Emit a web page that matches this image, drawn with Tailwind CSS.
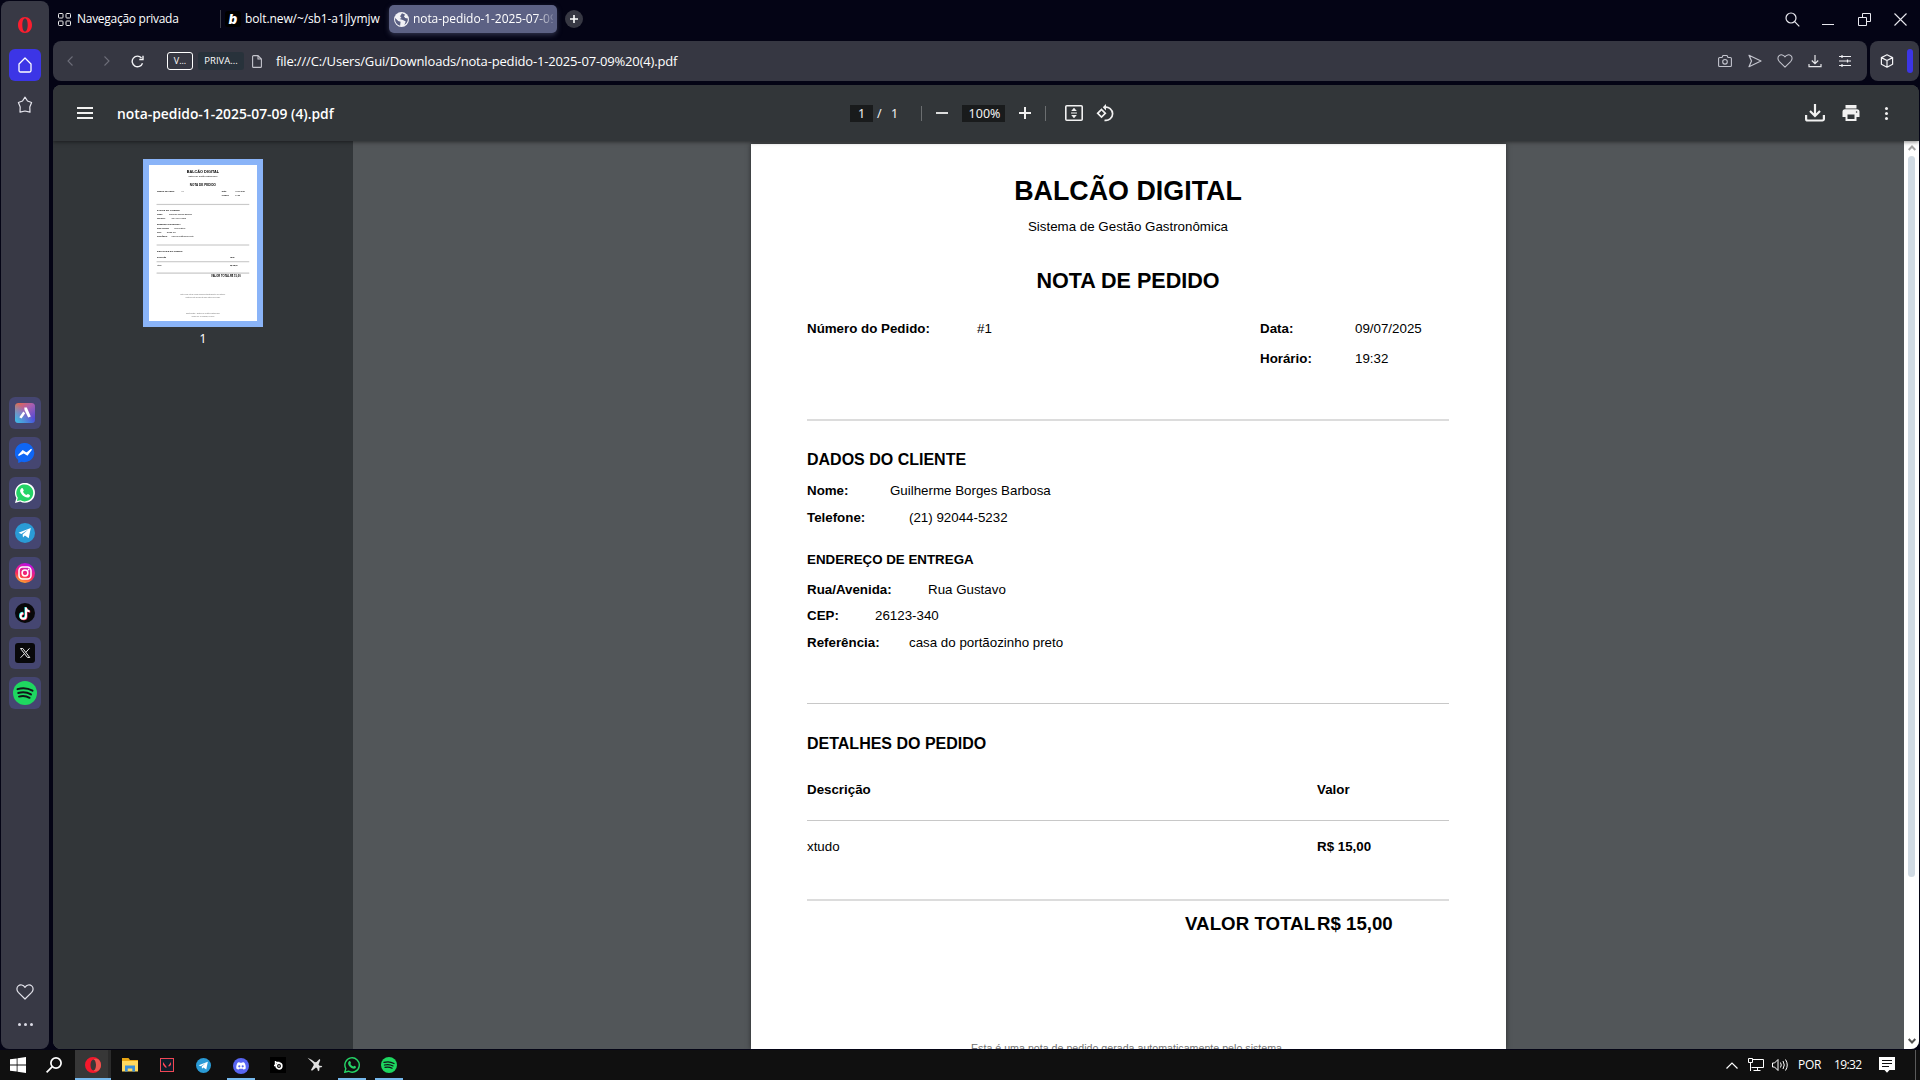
<!DOCTYPE html>
<html lang="pt-BR">
<head>
<meta charset="utf-8">
<title>nota-pedido-1-2025-07-09 (4).pdf</title>
<script src="https://cdn.jsdelivr.net/npm/@tailwindcss/browser@4"></script>
</head>
<body class="w-[1920px] h-[1080px] overflow-hidden bg-[#040415] flex flex-col text-white font-['Open_Sans',sans-serif]">
<svg class="hidden">
  <defs>
    <symbol id="tg" viewBox="0 0 20 20"><circle cx="10" cy="10" r="10" fill="#2a9bd6"/><path d="M3.5 9.7 15.8 4.9 13.7 15.3 9.9 12.6 8 14.4 7.6 11.4 13.2 6.6 6.4 10.9Z" fill="#fff"/></symbol>
    <symbol id="sp" viewBox="0 0 24 24"><circle cx="12" cy="12" r="12" fill="#1ed760"/><path d="M4.5 8.2c5-1.5 10.500-1 15 1.500M5.200 12c4.300-1.200 9-.8 12.800 1.400M6 15.600c3.600-1 7.400-.6 10.600 1.200" fill="none" stroke="#101418" stroke-width="1.900" stroke-linecap="round"/></symbol>
    <symbol id="heart" viewBox="0 0 18 16"><path d="M9 15 2.300 8.300C.4 6.300.5 3.400 2.300 1.900 4.300.3 7.300.7 9 3.300 10.700.7 13.700.3 15.700 1.900 17.500 3.400 17.600 6.300 15.700 8.300Z" fill="none" stroke="currentColor" stroke-width="1.200" stroke-linejoin="round"/></symbol>
    <symbol id="phone" viewBox="0 0 20 20"><path d="M6.300 5.400c.5-.6 1.300-.6 1.600.1l.8 1.700c.2.5-.7 1.300-.7 1.600.8 1.600 1.900 2.500 3.500 3.200.4 0 1-1.200 1.500-1l1.700.9c.5.3.3 1.500-.4 2.100-1.200 1-3 .7-5-.4-1.700-1-3-2.500-3.700-4-.8-1.700-.5-3.200.7-4.200Z" fill="currentColor"/></symbol>
  </defs>
</svg>

<div class="flex h-[1050px] shrink-0">
  <!-- Opera sidebar -->
  <aside class="ml-px mt-px mb-px w-12 rounded-lg bg-[#383945] flex flex-col items-center text-[#e4e4ec]">
    <svg class="mt-4 w-4 h-4" viewBox="0 0 16 16"><path fill-rule="evenodd" d="M8 0c4 0 7 3.500 7 8S12 16 8 16 1 12.500 1 8 4 0 8 0Zm0 1.500C6.400 1.500 5.300 4.200 5.300 8s1.100 6.500 2.700 6.500S10.700 11.800 10.700 8 9.600 1.500 8 1.500Z" fill="#fa1e2f"/></svg>
    <div class="mt-4 size-8 rounded-md bg-[#3c35e6] flex items-center justify-center">
      <svg class="w-4 h-4" viewBox="0 0 16 16"><path d="M8 1 14 7V13.500a1.500 1.500 0 0 1-1.500 1.500h-9A1.500 1.500 0 0 1 2 13.500V7Z" fill="none" stroke="#fff" stroke-width="1.300" stroke-linejoin="round"/></svg>
    </div>
    <svg class="mt-[15px] w-[18px] h-[18px]" viewBox="0 0 18 18"><path d="M9 1.200 11.500 5 15.600 6.500 13.800 11 14 16.200 9 15 4 16.200 4.200 11 2.400 6.500 6.500 5Z" fill="none" stroke="currentColor" stroke-width="1.200" stroke-linejoin="round"/></svg>
    <div class="mt-[283px] flex flex-col gap-2">
      <div class="size-8 rounded-md bg-[#454671] flex items-center justify-center">
        <svg class="size-5" viewBox="0 0 20 20"><defs><linearGradient id="ar" x1="0" y1="0" x2=".7" y2="1"><stop offset="0" stop-color="#f0683a"/><stop offset=".45" stop-color="#a95fb0"/><stop offset="1" stop-color="#4f49d8"/></linearGradient><linearGradient id="ar2" x1="0" y1="1" x2=".6" y2=".4"><stop offset="0" stop-color="#35c6e8"/><stop offset="1" stop-color="#35c6e8" stop-opacity="0"/></linearGradient></defs><rect width="20" height="20" rx="3.500" fill="url(#ar)"/><rect width="20" height="20" rx="3.500" fill="url(#ar2)"/><path d="M9.300 4.500H11.800L15.800 13.500 13.200 14.500 9.500 7ZM8.300 8.500 10.200 10.200 6.500 15.500 4.300 14.300Z" fill="#fff"/></svg>
      </div>
      <div class="size-8 rounded-md bg-[#454671] flex items-center justify-center">
        <svg class="size-5" viewBox="0 0 20 20"><path d="M10 0a10 9.600 0 1 1-3.500 18.800L3.200 20V17A9.700 9.700 0 0 1 10 0Z" fill="#0f66f5"/><path d="M3.500 12.500 7.800 7.800 11.500 10.300 16.500 6.300 12.300 12 8.800 9.800Z" fill="#fff" stroke="#fff" stroke-width="1.200"/></svg>
      </div>
      <div class="size-8 rounded-md bg-[#454671] flex items-center justify-center text-white">
        <svg class="size-5" viewBox="0 0 20 20"><path d="M0 20 1.400 15A10 10 0 1 1 5.200 18.600Z" fill="#fff"/><path d="M1.900 18.100 2.800 14.800A8.500 8.500 0 1 1 5.400 17.200Z" fill="#25d366"/><use href="#phone"/></svg>
      </div>
      <div class="size-8 rounded-md bg-[#454671] flex items-center justify-center"><svg class="size-5"><use href="#tg"/></svg></div>
      <div class="size-8 rounded-md bg-[#454671] flex items-center justify-center">
        <svg class="size-5" viewBox="0 0 20 20"><defs><linearGradient id="ig" x1=".25" y1="1" x2=".6" y2="0"><stop offset="0" stop-color="#ffb627"/><stop offset=".4" stop-color="#fb2a5c"/><stop offset="1" stop-color="#b80de8"/></linearGradient></defs><circle cx="10" cy="10" r="10" fill="url(#ig)"/><rect x="4" y="4" width="12" height="12" rx="3.500" fill="none" stroke="#fff" stroke-width="1.500"/><circle cx="10" cy="10" r="2.900" fill="none" stroke="#fff" stroke-width="1.500"/><circle cx="13.600" cy="6.500" r=".9" fill="#fff"/></svg>
      </div>
      <div class="size-8 rounded-md bg-[#454671] flex items-center justify-center">
        <svg class="size-5" viewBox="0 0 20 20"><circle cx="10" cy="10" r="10" fill="#08080a"/><g fill="none" stroke-width="1.900"><path d="M10.400 4V12.800A2.700 2.700 0 1 1 7.700 9.800M10.400 4A3.800 3.800 0 0 0 14 7.800" stroke="#25f4ee"/><path d="M11.600 5V13.800A2.700 2.700 0 1 1 8.900 10.800M11.600 5A3.800 3.800 0 0 0 15.200 8.800" stroke="#fe2c55"/><path d="M11 4.400V13.300A2.700 2.700 0 1 1 8.300 10.300M11 4.400A3.800 3.800 0 0 0 14.600 8.200" stroke="#fff"/></g></svg>
      </div>
      <div class="size-8 rounded-md bg-[#454671] flex items-center justify-center">
        <svg class="size-5" viewBox="0 0 20 20"><rect width="20" height="20" rx="3" fill="#08080a"/><path d="M5.500 5.500H7.800L14.800 14.500H12.500ZM14.500 5.300 10.800 9.400M9.300 10.800 5.500 14.800" fill="none" stroke="#e8e8e8" stroke-width="1"/></svg>
      </div>
      <div class="size-8 rounded-md bg-[#454671] flex items-center justify-center"><svg class="size-6"><use href="#sp"/></svg></div>
    </div>
    <svg class="mt-[275px] mr-px w-[18px] h-4"><use href="#heart"/></svg>
    <div class="mt-[23px] flex gap-[3px]"><i class="size-[3px] rounded-full bg-[#dcdce6]"></i><i class="size-[3px] rounded-full bg-[#dcdce6]"></i><i class="size-[3px] rounded-full bg-[#dcdce6]"></i></div>
  </aside>

  <div class="ml-1 flex w-[1867px] flex-col">
    <!-- tab strip -->
    <div class="flex h-[41px] items-start text-[12px]">
      <div class="ml-[5px] mt-[5px] flex h-7 w-[162px] items-center">
        <svg class="w-[13px] h-[13px] shrink-0" viewBox="0 0 13 13" fill="none" stroke="#eee" stroke-width="1"><rect x=".5" y=".5" width="4.500" height="4.500" rx=".8"/><rect x="8" y=".5" width="4.500" height="4.500" rx=".8"/><rect x=".5" y="8" width="4.500" height="4.500" rx=".8"/><rect x="8" y="8" width="4.500" height="4.500" rx=".8"/></svg>
        <span class="ml-1.5 whitespace-nowrap tracking-[-0.28px]">Navegação privada</span>
      </div>
      <div class="mt-2.5 h-[18px] w-px bg-[#3d3e4a]"></div>
      <div class="mt-[5px] ml-1 flex h-7 w-[160px] items-center">
        <span class="flex size-4 shrink-0 items-center justify-center rounded-[3px] bg-black text-[13px] leading-none font-black italic font-['Inter',sans-serif]">b</span>
        <span class="ml-1 whitespace-nowrap tracking-[-0.1px]">bolt.new/~/sb1-a1jlymjw</span>
      </div>
      <div class="mt-[5px] ml-[4px] flex h-7 w-[168px] items-center overflow-hidden rounded-[5px] bg-[#5c6184] shadow-[0_2px_5px_#5c618480]">
        <svg class="ml-[5px] w-[15px] h-[15px] shrink-0" viewBox="0 0 16 16"><circle cx="8" cy="8" r="8" fill="#f1f1f4"/><path d="M1.300 6.500 4.500 9.500 7 10.500 6.500 14.700A7 7 0 0 1 1.300 6.500ZM8.500 1.300 6.500 4.500 8 6.500 6 7.500 9.500 8.500 12.500 10 11 13.800A7 7 0 0 0 14.700 7L12 6.500 10.500 4.500 12 3Z" fill="#5c6184"/></svg>
        <span class="ml-1 w-[140px] overflow-hidden whitespace-nowrap tracking-[-0.08px] [mask-image:linear-gradient(to_right,black_122px,transparent_144px)]">nota-pedido-1-2025-07-09 (4).pdf</span>
      </div>
      <div class="ml-2 mt-2.5 flex size-[18px] items-center justify-center rounded-full bg-[#373843]"><svg class="size-2" viewBox="0 0 8 8"><path d="M4 0V8M0 4H8" stroke="#fff" stroke-width="1.600"/></svg></div>
      <div class="mt-3 mr-[13px] ml-auto flex items-center text-[#e8e8ee]">
        <svg class="size-[15px]" viewBox="0 0 15 15" fill="none" stroke="currentColor" stroke-width="1.200"><circle cx="6" cy="6" r="5"/><path d="M9.700 9.700 14.300 14.300"/></svg>
        <svg class="ml-[22px] h-[15px] w-3" viewBox="0 0 12 15"><path d="M0 12.500H12" stroke="currentColor"/></svg>
        <svg class="ml-6 size-[13px]" viewBox="0 0 13 13" fill="none" stroke="currentColor"><path d="M.5 4.500H8.500V12.500H.5ZM4.500 4.500V.5H12.500V8.500H8.500"/></svg>
        <svg class="ml-[23px] size-[13px]" viewBox="0 0 13 13" stroke="currentColor" stroke-width="1.100"><path d="M.5.5 12.500 12.500M12.500.5.5 12.500"/></svg>
      </div>
    </div>

    <!-- address bar -->
    <div class="flex h-10 gap-[3px]">
      <div class="flex w-[1814px] items-center rounded-lg bg-[#363742]">
        <svg class="ml-3.5 h-2.5 w-1.5" viewBox="0 0 6 10" fill="none" stroke="#6d6e79" stroke-width="1.100"><path d="M5.500.5 1 5 5.500 9.500"/></svg>
        <svg class="ml-[31px] h-2.5 w-1.5" viewBox="0 0 6 10" fill="none" stroke="#6d6e79" stroke-width="1.100"><path d="M.5.500 5 5 .5 9.500"/></svg>
        <svg class="ml-[21px] size-[13px]" viewBox="0 0 13 13" fill="none" stroke="#f2f2f5" stroke-width="1.400"><path d="M11.500 8.200A5.300 5.300 0 1 1 10.500 3"/><path d="M12 .8V4.500H8.300" /></svg>
        <div class="ml-[23px] flex h-[18px] w-[26px] items-center justify-center rounded-[3px] border border-white text-[9px]">V...</div>
        <div class="ml-[5px] flex h-[18px] w-[46px] items-center justify-center rounded-[3px] bg-[#28323b] text-[9.500px]">PRIVA...</div>
        <svg class="ml-2 h-[13px] w-2.5" viewBox="0 0 10 13" fill="none" stroke="#c5c5cd" stroke-width="1.100"><path d="M6 .6H1.600A1 1 0 0 0 .6 1.600V11.400a1 1 0 0 0 1 1H8.400a1 1 0 0 0 1-1V4ZM6 .6V4H9.400"/></svg>
        <span class="mt-px ml-3.5 whitespace-nowrap text-[13px] tracking-[-0.16px]">file:///C:/Users/Gui/Downloads/nota-pedido-1-2025-07-09%20(4).pdf</span>
        <div class="mr-[15px] ml-auto flex items-center gap-4 text-[#c3c4cd]">
          <svg class="size-3.5" viewBox="0 0 14 14" fill="none" stroke="currentColor" stroke-width="1.100"><path d="M1.600 3.500H4L5 1.500H9L10 3.500H12.400A1 1 0 0 1 13.400 4.500V11.500A1 1 0 0 1 12.400 12.500H1.600A1 1 0 0 1 .6 11.500V4.500A1 1 0 0 1 1.600 3.500Z"/><circle cx="7" cy="7.800" r="2.300"/></svg>
          <svg class="size-3.5" viewBox="0 0 14 14" fill="none" stroke="currentColor" stroke-width="1.200" stroke-linejoin="round"><path d="M1 1.300 13 7 1 12.700 3.500 7Z"/></svg>
          <svg class="-mx-px h-3.5 w-4"><use href="#heart"/></svg>
          <svg class="size-3.5 text-[#e6e6ea]" viewBox="0 0 14 14" fill="none" stroke="currentColor" stroke-width="1.200"><path d="M7 1V9.500M3.800 6.500 7 9.600 10.200 6.500M1 10V12.600H13V10"/></svg>
          <svg class="size-3.5 text-[#f0f0f4]" viewBox="0 0 14 14" fill="none" stroke="currentColor" stroke-width="1.200"><path d="M1 2.500H13M1 7H13M1 11.500H13M4 1V4M9.500 5.500V8.500M4 10V13"/></svg>
        </div>
      </div>
      <div class="flex w-[49px] items-center rounded-lg bg-[#363742]">
        <svg class="ml-2.5 size-3.5" viewBox="0 0 14 14" fill="none" stroke="#f2f2f5" stroke-width="1.200" stroke-linejoin="round"><path d="M7 .8 12.600 3.600V10.200L7 13.200 1.400 10.200V3.600ZM1.400 3.600 7 6.500 12.600 3.600M7 6.500V13.200"/></svg>
        <div class="ml-[13px] h-6 w-1.5 rounded-full bg-[#3c35e6]"></div>
      </div>
    </div>

    <!-- PDF viewer -->
    <div class="mt-1 flex h-[964px] w-[1866px] flex-col overflow-hidden rounded-lg bg-[#525659]">
      <header class="relative z-10 flex h-14 shrink-0 items-center bg-[#323639] shadow-[0_1px_4px_#00000080]">
        <svg class="ml-6 h-3 w-4" viewBox="0 0 16 12" fill="#f1f1f1"><path d="M0 0H16V2H0ZM0 5H16V7H0ZM0 10H16V12H0Z"/></svg>
        <h1 class="mt-0.5 ml-6 w-[240px] whitespace-nowrap text-[13.850px] font-semibold">nota-pedido-1-2025-07-09 (4).pdf</h1>
        <div class="ml-[493px] flex items-center text-[12.500px] font-['Noto_Sans',sans-serif] text-[#f1f1f1]">
          <span class="flex h-[17px] w-[23px] items-center justify-center bg-[#191b1c] pt-0.5">1</span>
          <span class="ml-1 w-3.5 pt-0.5">/</span><span class="w-[27px] pt-0.5">1</span>
          <i class="ml-[3px] h-[15px] w-px bg-[#6b6e70]"></i>
          <i class="ml-3.5 h-0.5 w-3 bg-[#dcdddd]"></i>
          <span class="ml-3.5 flex h-[17px] w-[43px] items-center justify-center bg-[#191b1c] pt-0.5 pl-0.5">100%</span>
          <svg class="ml-3.5 size-3" viewBox="0 0 12 12"><path d="M6 0V12M0 6H12" stroke="#f1f1f1" stroke-width="2"/></svg>
          <i class="ml-3.5 h-[15px] w-px bg-[#6b6e70]"></i>
          <svg class="ml-[19px] h-4 w-[18px]" viewBox="0 0 18 16"><rect x=".8" y=".8" width="16.400" height="14.400" rx="1" fill="none" stroke="#f1f1f1" stroke-width="1.600"/><path d="M9 2.800 11.800 6H6.200ZM9 13.200 6.200 10H11.800ZM6 7.500H12V8.500H6Z" fill="#f1f1f1"/></svg>
          <svg class="ml-[13px] size-[18px]" viewBox="0 0 18 18" fill="none" stroke="#f1f1f1" stroke-width="1.700"><path d="M5.500 5.500 9.300 9.300 5.500 13.100 1.700 9.300Z"/><path d="M8.500 3.200A6.700 6.700 0 1 1 8.500 16.300"/><path d="M10 0V6.400L6.800 3.200Z" fill="#f1f1f1" stroke="none"/></svg>
        </div>
        <div class="mr-[31px] ml-auto flex items-center">
          <svg class="h-[18px] w-5" viewBox="0 0 20 18" fill="none" stroke="#f1f1f1" stroke-width="2.200"><path d="M10 0V11M5 7 10 12 15 7M1.100 11V15a1.500 1.500 0 0 0 1.500 1.500H17.400A1.500 1.500 0 0 0 18.900 15V11"/></svg>
          <svg class="ml-[17px] h-4 w-[18px]" viewBox="0 0 18 16"><path d="M3.500 0H14.500V3.500H3.500ZM3 4.300H15a2.500 2.500 0 0 1 2.500 2.500V12H14.500V16H3.500V12H.5V6.800A2.500 2.500 0 0 1 3 4.300Z" fill="#f1f1f1"/><path d="M5.500 9.500H12.500V14H5.500Z" fill="#323639"/><circle cx="14.600" cy="7" r=".8" fill="#323639"/></svg>
          <div class="ml-[25px] flex flex-col gap-0.5"><i class="size-[3px] rounded-full bg-[#f1f1f1]"></i><i class="size-[3px] rounded-full bg-[#f1f1f1]"></i><i class="size-[3px] rounded-full bg-[#f1f1f1]"></i></div>
        </div>
      </header>

      <div class="flex min-h-0 flex-1">
        <nav class="flex w-[300px] shrink-0 flex-col items-center bg-[#323639]">
          <div class="mt-[18px] h-[168px] w-[120px] border-[6px] border-[#8ab4f8] bg-white overflow-hidden"><div id="thumb" aria-hidden="true" class="h-[1085px] w-[755px] origin-top-left scale-[0.143] [&_hr]:shadow-[0_0_0_3px_#c4c4c4]"></div></div>
          <span class="mt-[3px] text-[12px] leading-[18px] font-['Noto_Sans',sans-serif]">1</span>
        </nav>
        <main class="flex min-w-0 flex-1 pl-[398px]">
          <div class="mt-[3px] h-[905px] w-[755px] overflow-hidden bg-white shadow-[0_0_5px_#00000080]">
            <article id="page" class="flex h-[1085px] w-[755px] flex-col bg-white pr-[57px] pl-14 text-black text-[13.330px] leading-5 font-['Liberation_Sans',Arial,sans-serif]">
              <h2 class="mt-[31px] text-center text-[26.850px] leading-8 font-bold">BALCÃO DIGITAL</h2>
              <p class="mt-[10px] text-center">Sistema de Gestão Gastronômica</p>
              <h3 class="mt-[31px] text-center text-[21.550px] leading-[26px] font-bold">NOTA DE PEDIDO</h3>
              <div class="mt-[25px] grid grid-cols-[170px_283px_95px_auto] gap-y-2.5">
                <b>Número do Pedido:</b><span>#1</span><b>Data:</b><span>09/07/2025</span>
                <b class="col-start-3">Horário:</b><span>19:32</span>
              </div>
              <hr class="mt-[50px] h-0.5 border-0 bg-[#dcdcdc]">
              <h4 class="mt-[27px] text-[16px] leading-6 font-bold">DADOS DO CLIENTE</h4>
              <div class="mt-[9px] flex"><b class="w-[83px]">Nome:</b><span>Guilherme Borges Barbosa</span></div>
              <div class="mt-[7px] flex"><b class="w-[102px]">Telefone:</b><span>(21) 92044-5232</span></div>
              <h5 class="mt-[22px] font-bold">ENDEREÇO DE ENTREGA</h5>
              <div class="mt-[10px] flex"><b class="w-[121px]">Rua/Avenida:</b><span>Rua Gustavo</span></div>
              <div class="mt-[6px] flex"><b class="w-[68px]">CEP:</b><span>26123-340</span></div>
              <div class="mt-[7px] flex"><b class="w-[102px]">Referência:</b><span>casa do portãozinho preto</span></div>
              <hr class="mt-[50px] h-px border-0 bg-[#c8c8c8]">
              <h4 class="mt-[28px] text-[16px] leading-6 font-bold">DETALHES DO PEDIDO</h4>
              <div class="mt-[24px] flex font-bold"><span class="w-[510px]">Descrição</span><span>Valor</span></div>
              <hr class="mt-[20px] h-px border-0 bg-[#c8c8c8]">
              <div class="mt-[16px] flex"><span class="w-[510px]">xtudo</span><b>R$ 15,00</b></div>
              <hr class="mt-[42px] h-0.5 border-0 bg-[#dcdcdc]">
              <div class="mt-[10px] flex pl-[378px] text-[18.670px] leading-[26px] font-bold"><span class="w-[132px] whitespace-nowrap tracking-[0.05px]">VALOR TOTAL</span><span>R$ 15,00</span></div>
              <p class="mt-[101px] text-center text-[10.670px] leading-5 text-[#707070]">Esta é uma nota de pedido gerada automaticamente pelo sistema.</p>
              <p class="text-center text-[10.670px] leading-5 text-[#707070]">Mantenha este documento para controle do pedido.</p>
              <p class="mt-[92px] text-center text-[10.670px] leading-5 text-[#707070]">Balcão Digital - Sistema de Gestão Gastronômica</p>
              <p class="text-center text-[10.670px] leading-5 text-[#707070]">Gerado em: 09/07/2025, 19:32:00</p>
            </article>
          </div>
        </main>
        <div class="flex w-[15px] flex-col items-center bg-white">
          <svg class="mt-1 h-[6px] w-2 shrink-0" viewBox="0 0 8 6" fill="none" stroke="#a3a3a3" stroke-width="2"><path d="M.7 5 4 1.500 7.300 5"/></svg>
          <div class="mt-[5px] h-[721px] w-[7px] rounded-full bg-[#d0dae3]"></div>
          <svg class="mt-auto mb-[5px] h-[6px] w-2 shrink-0" viewBox="0 0 8 6" fill="none" stroke="#505050" stroke-width="2"><path d="M.7 1 4 4.500 7.300 1"/></svg>
        </div>
      </div>
    </div>
  </div>
</div>

<!-- Windows taskbar -->
<footer class="flex h-[30px] items-stretch bg-[#101010]">
  <div class="flex w-[75px] items-center pl-2.5">
    <svg class="size-4" viewBox="0 0 16 16" fill="#fff"><path d="M0 2.300 6.700 1.400V7.600H0ZM7.500 1.300 16 0V7.600H7.500ZM0 8.400H6.700V14.600L0 13.700ZM7.500 8.400H16V16L7.500 14.800Z"/></svg>
    <svg class="ml-5 size-4" viewBox="0 0 16 16" fill="none" stroke="#fff" stroke-width="1.700"><circle cx="10" cy="6" r="5.100"/><path d="M6.300 9.700.6 15.400"/></svg>
  </div>
  <div class="flex w-9 border-b-2 border-[#76b9ed]"><div class="flex w-[33px] items-center justify-center bg-[#373737]"><svg class="ml-[3px] mt-0.5 size-4" viewBox="0 0 16 16"><path fill-rule="evenodd" d="M8 0a8 8 0 1 1 0 16A8 8 0 0 1 8 0Zm.5 2.500C6.800 2.500 5.500 4.800 5.500 8s1.300 5.500 3 5.500S11 11.200 11 8 10.200 2.500 8.500 2.500Z" fill="#f5182c"/><path d="M8.500 2.500C10.200 2.500 11 4.800 11 8S10.200 13.500 8.500 13.500C12 16 16 12.500 16 8S12 0 8.500 2.500Z" fill="#e8564f"/></svg></div><div class="w-[3px] bg-[#2b2b2b]"></div></div>
  <div class="flex w-[37px] items-center justify-center">
    <svg class="h-3.5 w-4" viewBox="0 0 16 14"><path d="M0 0H6.500L8 2H16V5H0Z" fill="#e8a613"/><path d="M0 3H16V13.500H0Z" fill="#ffd95e"/><path d="M3 7.500H13V13.500H10.300V10.500H5.700V13.500H3Z" fill="#3a8fd8"/></svg>
  </div>
  <div class="flex w-[37px] items-center justify-center">
    <svg class="size-3.5" viewBox="0 0 14 14"><rect x=".5" y=".5" width="13" height="13" fill="#0d1c29" stroke="#f04755"/><path d="M3 4 7 9.500H5.200L3 6.800ZM11 4V6.800L9.800 8.300H8Z" fill="#ff4655"/></svg>
  </div>
  <div class="flex w-[37px] items-center justify-center"><svg class="size-[15px]"><use href="#tg"/></svg></div>
  <div class="relative flex w-[37px] items-center justify-center">
    <svg class="mt-px size-4" viewBox="0 0 16 16"><circle cx="8" cy="8" r="8" fill="#5865f2"/><path d="M4.600 4.800C5.800 4.200 6.400 4.200 6.500 4.300L6.800 4.800H9.200L9.500 4.300C9.800 4.200 10.600 4.300 11.400 4.800 12.500 6.600 12.900 8.400 12.700 10.500 11.800 11.300 11 11.500 10.400 11.600L9.800 10.700H6.200L5.600 11.600C5 11.500 4.200 11.300 3.300 10.500 3.100 8.400 3.500 6.600 4.600 4.800Z" fill="#fff"/><circle cx="6.300" cy="8.300" r="1.100" fill="#5865f2"/><circle cx="9.700" cy="8.300" r="1.100" fill="#5865f2"/></svg>
    <i class="absolute bottom-0 left-[5px] h-0.5 w-7 bg-[#76b9ed]"></i>
  </div>
  <div class="flex w-[37px] items-center justify-center">
    <svg class="size-4" viewBox="0 0 16 16"><rect width="16" height="16" fill="#000"/><path d="M5.500 4V8M5.500 5.500H9.500M4 8.500H6" stroke="#fff" stroke-width="1.400"/><circle cx="9" cy="9" r="2.800" fill="none" stroke="#fff" stroke-width="1.700"/><path d="M9 8V10" stroke="#fff"/></svg>
  </div>
  <div class="flex w-[37px] items-center justify-center">
    <svg class="size-4" viewBox="0 0 16 16"><path d="M.5.800 4.500 2.800 8 5.300 9.500 5 12.500 2 13.300 3 11.500 7.500 12.500 8.800 15.300 9 14.500 10.300 12.500 10.500 12.300 13.500 11 14.300 10.300 11.500 9 10.500 5 13.800 4 13 6.800 8 6.300 6.500Z" fill="#e0e0e0"/></svg>
  </div>
  <div class="relative flex w-[38px] items-center justify-center text-[#25d366]">
    <svg class="size-4" viewBox="0 0 20 20"><path d="M1 19 2.300 14.500A9 9 0 1 1 5.600 17.800Z" fill="none" stroke="currentColor" stroke-width="1.800"/><use href="#phone"/></svg>
    <i class="absolute bottom-0 left-[5px] h-0.5 w-7 bg-[#76b9ed]"></i>
  </div>
  <div class="relative flex w-[36px] items-center justify-center">
    <svg class="size-4"><use href="#sp"/></svg>
    <i class="absolute bottom-0 left-1 h-0.5 w-7 bg-[#76b9ed]"></i>
  </div>
  <div class="ml-auto flex items-center text-[12px]">
    <svg class="h-[7px] w-3" viewBox="0 0 12 7" fill="none" stroke="#fff" stroke-width="1.200"><path d="M.5 6.500 6 1 11.500 6.500"/></svg>
    <svg class="ml-2.5 h-3.5 w-4" viewBox="0 0 16 14" fill="none" stroke="#fff"><path d="M5 1.500H15.500V9.500H3.500M9.500 9.500V12.500M5.500 12.500H12.500M.5.500H4.500V4.500H.5ZM2.500 4.500V13"/></svg>
    <svg class="ml-2 h-3.5 w-[17px]" viewBox="0 0 17 14" fill="none" stroke="#fff"><path d="M.5 5H2.500L6 1.500V12.500L2.500 9H.5ZM8.500 4.500Q10 7 8.500 9.500M11 3Q13.500 7 11 11M13.500 1.500Q17 7 13.500 12.500"/></svg>
    <span class="ml-[9px] w-9 tracking-[-0.3px]">POR</span>
    <span class="w-[45px] tracking-[-0.6px]">19:32</span>
    <svg class="h-4 w-4" viewBox="0 0 16 16"><path d="M0 0H16V13H10.500L8 15.800 5.500 13H0Z" fill="#fff"/><path d="M3 3.500H13M3 6.500H13M3 9.500H10" stroke="#101010"/></svg>
    <i class="mr-1 ml-5 h-[30px] w-px bg-[#5a5a5a]"></i>
  </div>
</footer>
<script>
  // The side panel previews the same page at thumbnail scale.
  const copy = document.getElementById('page').cloneNode(true);
  copy.removeAttribute('id');
  document.getElementById('thumb').append(copy);
</script>
</body>
</html>
